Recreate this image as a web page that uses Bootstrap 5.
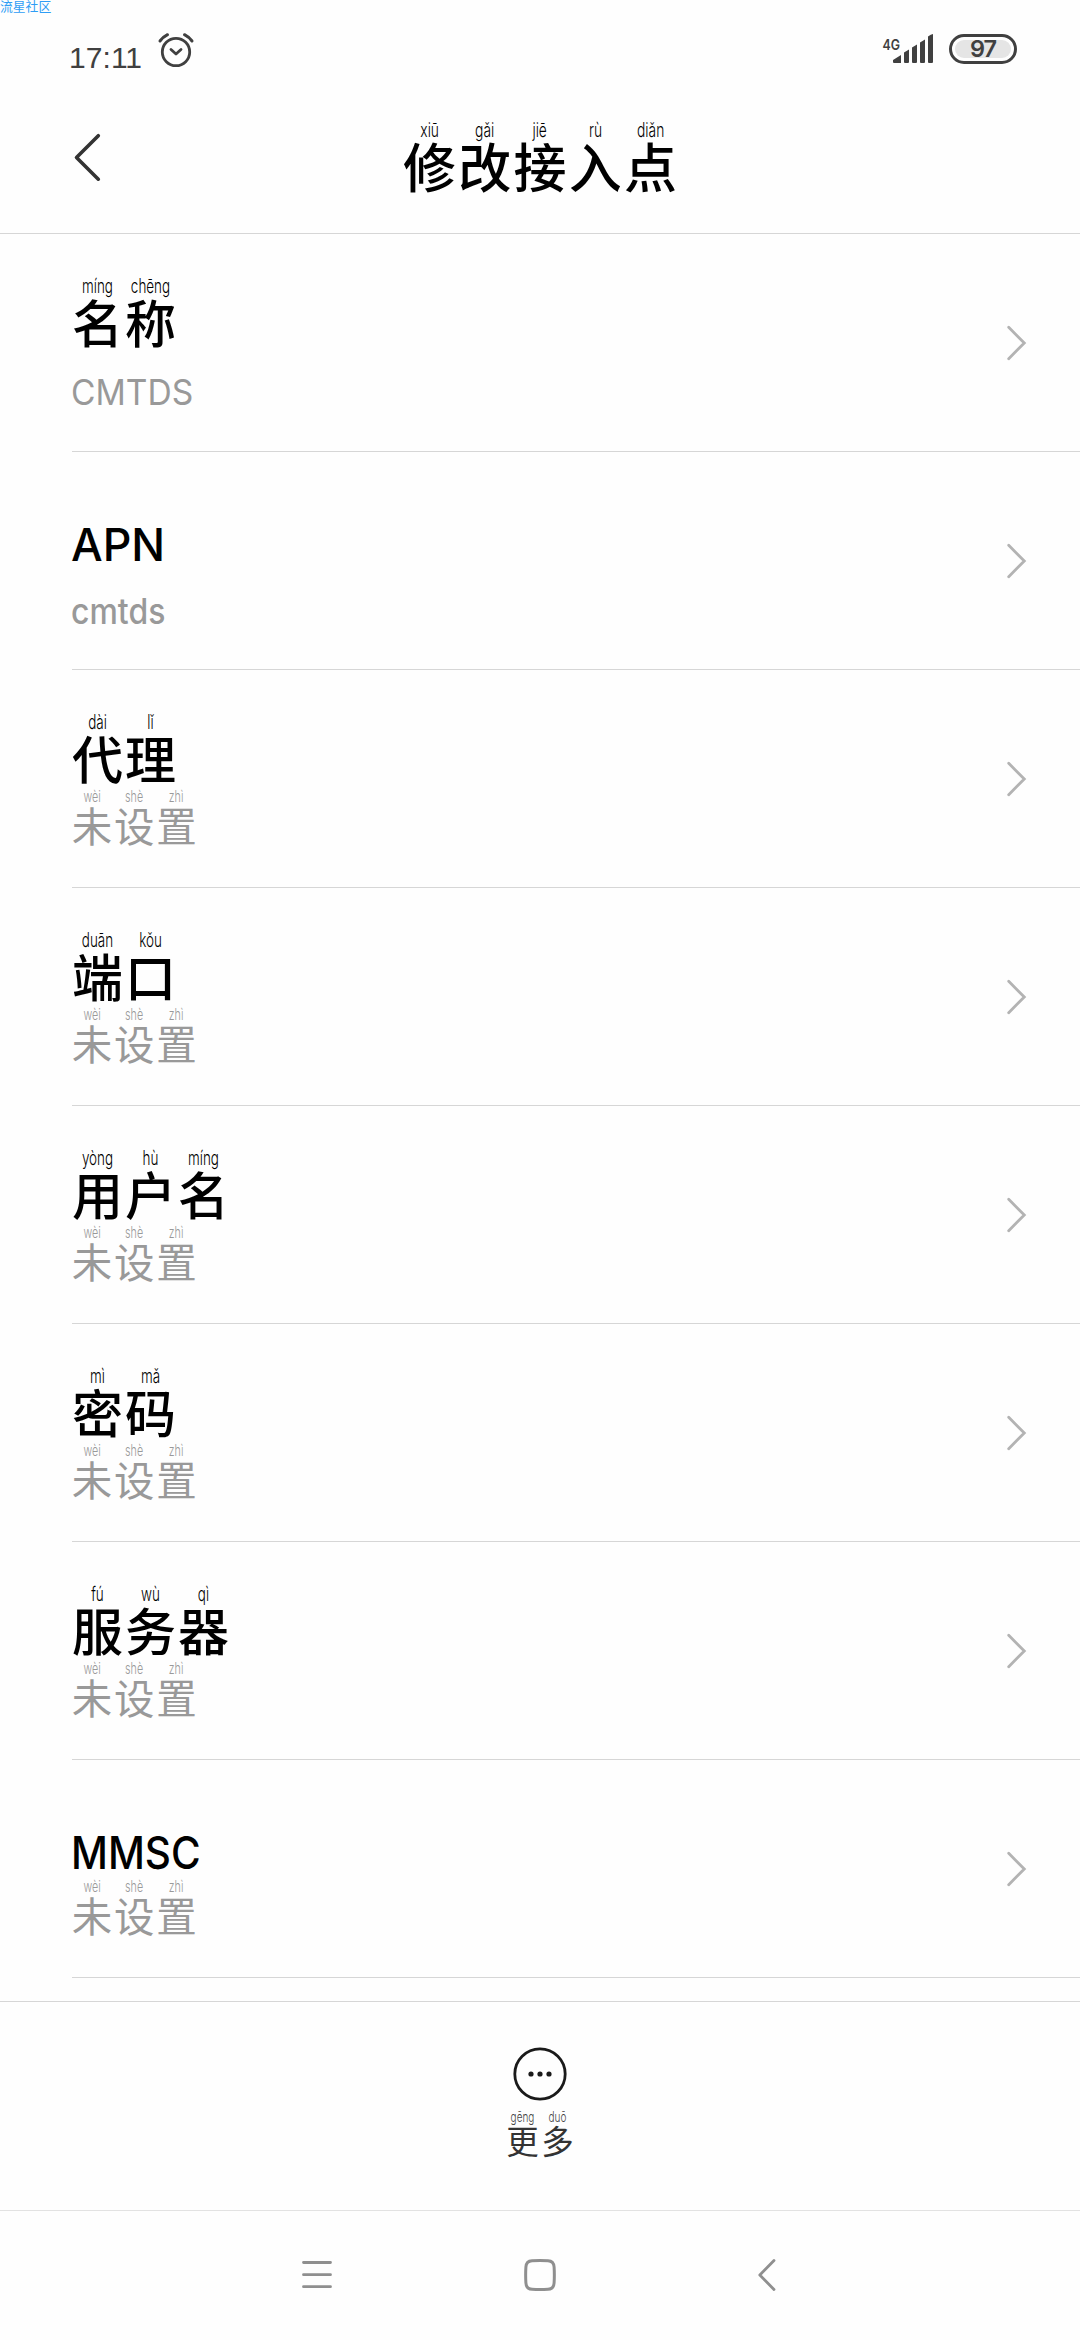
<!DOCTYPE html>
<html lang="zh-CN">
<head>
<meta charset="utf-8">
<meta name="viewport" content="width=device-width, initial-scale=1">
<title>修改接入点</title>
<link href="https://cdn.jsdelivr.net/npm/bootstrap@5.3.0/dist/css/bootstrap.min.css" rel="stylesheet">
<style>
body{width:1080px;height:2340px;overflow:hidden;background:#fefefe;color:#000;font-family:Inter,"Noto Sans CJK SC",sans-serif}
svg{display:block;flex:none;overflow:visible}
.watermark{left:0;top:-3px;font:12.8px/18px "Noto Sans CJK SC",sans-serif;color:#2e9df5}
.status-bar{height:84px;padding:0 63px 0 69px;color:#404040}
.clock{font:30px/36px "Liberation Sans",sans-serif;padding-top:40px;width:88px;white-space:nowrap}
.clock i{font-style:normal;display:inline-block;width:8.5px;text-align:center}
.alarm{margin-top:31px}
.signal{margin-top:32px}
.signal text{font:600 14.5px Inter,sans-serif;fill:#404040}
.battery{width:68px;height:30px;margin:34px 0 0 15px;border:3.5px solid #404040;border-radius:15px;padding:2.5px 3px}
.battery span{background:#e5e5e5;border-radius:9px;font:600 23.5px/18px Inter,sans-serif;letter-spacing:-1px;height:18px}
.title-bar{height:150px;border-bottom:1px solid #d6d6d6;padding:0 73px}
.title-bar .side{width:32px;padding-top:50px}
.zi{display:flex;flex-direction:column;text-align:center;width:53px;flex:none}
.py{font:300 19.5px/24px Inter,sans-serif;height:24px;transform:scaleX(.69);white-space:nowrap;display:flex;justify-content:center}
.hz{font:500 51px/53px "Noto Sans CJK SC",sans-serif;margin-top:-3px}
.title-words{padding-top:34px}
.title-words .zi{width:55.3px}
.title-words .py{font-size:20px}
.title-words .hz{font-size:53px}
.setting{height:218px;margin-left:71px;padding-right:54px;position:relative}
.setting::after{content:"";position:absolute;left:1px;right:0;bottom:0;border-bottom:1px solid #d6d6d6}
.label-line{height:118px;padding-top:40px}
.latin{font:500 44.7px/54px Inter,sans-serif;padding-top:26px;transform-origin:0 0}
.tight{transform:scaleX(.905)}
.value-line{height:60px;color:#999}
.value-line .zi{width:42.2px}
.value-line .py{font-size:15.5px;line-height:18px;height:18px}
.value-line .hz{font-size:40.5px;line-height:42px;font-weight:400;margin-top:-2px}
.value-latin{font:400 35.5px/42px Inter,sans-serif;padding-top:20px;transform:scaleX(.945);transform-origin:0 0}
.value-latin.lower{font-weight:500;transform:scaleX(.9);padding-top:21px}
.more-bar{height:209px;margin-top:23px;border-top:1px solid #d6d6d6;padding-top:44px;color:#333}
.more-bar .zi{width:35px}
.more-bar .words{padding-top:6px}
.more-bar .py{font-size:14.5px;line-height:18px;height:18px;color:#444}
.more-bar .hz{font-size:32.5px;line-height:34px;font-weight:400}
.system-nav{height:130px;border-top:1px solid #e2e2e2;padding:0 302px 2px}
</style>
</head>
<body class="position-relative d-flex flex-column">
<div class="watermark position-absolute">流星社区</div>
<header>
  <div class="status-bar d-flex align-items-start">
    <div class="clock">17<i>:</i>11</div>
    <svg class="alarm" width="38" height="38" viewBox="157 31 38 38" fill="none" stroke="#404040" stroke-width="2.8" stroke-linecap="round" stroke-linejoin="round"><circle cx="176" cy="52" r="13.7"/><path d="M171 49.5l5 4.500 5-4.500"/><path d="M160 41q3-4 7.500-6.300M192 41q-3-4-7.500-6.300" stroke-width="3"/></svg>
    <svg class="signal ms-auto" width="52" height="34" viewBox="881 32 52 34" fill="#404040"><text x="881.5" y="50" textLength="17.5" lengthAdjust="spacingAndGlyphs">4G</text><path d="M892 60l8-5v8h-7q-1 0-1-1zM903 52.500l5-3V62q0 1-1 1h-3q-1 0-1-1zM911 47.500l5-3V62q0 1-1 1h-3q-1 0-1-1zM919 42.500l5-3V62q0 1-1 1h-3q-1 0-1-1zM927 36.500q3-2.500 5-2.500v28q0 1-1 1h-3q-1 0-1-1z"/></svg>
    <div class="battery"><span class="d-block text-center">97</span></div>
  </div>
  <div class="title-bar d-flex justify-content-between align-items-start">
    <div class="side"><svg width="30" height="48" viewBox="73 134 30 48" fill="none" stroke="#333" stroke-width="3.6" stroke-linecap="round" stroke-linejoin="round"><path d="M98.300 135.700L76.500 157.500l21.800 21.700"/></svg></div>
    <div class="title-words d-flex" data-words="xiū 修 gǎi 改 jiē 接 rù 入 diǎn 点"></div>
    <div class="side"></div>
  </div>
</header>
<main id="settings"></main>
<footer>
  <div class="more-bar d-flex flex-column align-items-center">
    <svg width="56" height="56" viewBox="-28 -28 56 56"><circle r="25.2" fill="none" stroke="#1a1a1a" stroke-width="2.8"/><g fill="#1a1a1a"><circle cx="-9" r="2.600"/><circle r="2.600"/><circle cx="9" r="2.600"/></g></svg>
    <div class="words d-flex" data-words="gēng 更 duō 多"></div>
  </div>
  <nav class="system-nav d-flex justify-content-between align-items-center">
    <svg width="30" height="32" viewBox="0 0 30 32" stroke="#8f8f8f" stroke-width="2.800" stroke-linecap="round"><path d="M1.500 3.500h27M1.500 15.700h27M1.500 27.700h27"/></svg>
    <svg width="32" height="32" viewBox="0 0 32 32" fill="none" stroke="#8f8f8f" stroke-width="3"><path d="M8 1.700Q16 1.200 24 1.700 29.700 2 30.100 8q.5 8 0 16-.4 6-6.100 6.300-8 .5-16 0Q2.300 30 1.900 24q-.5-8 0-16Q2.300 2 8 1.700z"/></svg>
    <svg width="30" height="32" viewBox="-10 0 30 32" fill="none" stroke="#8f8f8f" stroke-width="2.800" stroke-linecap="round" stroke-linejoin="round"><path d="M16 1.500L1.800 16 16 30.500"/></svg>
  </nav>
</footer>
<script src="https://cdn.jsdelivr.net/npm/bootstrap@5.3.0/dist/js/bootstrap.bundle.min.js"></script>
<script>
const unset = 'wèi 未 shè 设 zhì 置';
const settings = [
  ['míng 名 chēng 称', 'CMTDS'],
  ['APN', 'cmtds'],
  ['dài 代 lǐ 理', unset],
  ['duān 端 kǒu 口', unset],
  ['yòng 用 hù 户 míng 名', unset],
  ['mì 密 mǎ 码', unset],
  ['fú 服 wù 务 qì 器', unset],
  ['MMSC', unset]
];
// Turns "pinyin character" pairs into annotated characters
function annotate(words) {
  return words.replace(/(\S+) (\S)(?: |$)/g, '<span class="zi"><span class="py">$1</span><span class="hz">$2</span></span>');
}
function line(text, latinClass) {
  return text.includes(' ') ? annotate(text) : `<span class="${latinClass}">${text}</span>`;
}
document.getElementById('settings').innerHTML = settings.map(([label, value]) => `
  <div class="setting d-flex justify-content-between align-items-center">
    <div class="align-self-start">
      <div class="label-line d-flex">${line(label, label.length > 3 ? 'latin tight' : 'latin')}</div>
      <div class="value-line d-flex">${line(value, value === value.toLowerCase() ? 'value-latin lower' : 'value-latin')}</div>
    </div>
    <svg width="20" height="36" viewBox="1006 325 20 36" fill="none" stroke="#b3b3b3" stroke-width="2.800" stroke-linecap="round"><path d="M1008.700 327.300L1024.300 343l-15.600 15.700"/></svg>
  </div>`).join('');
document.querySelectorAll('[data-words]').forEach(el => { el.innerHTML = annotate(el.dataset.words); });
</script>
</body>
</html>
